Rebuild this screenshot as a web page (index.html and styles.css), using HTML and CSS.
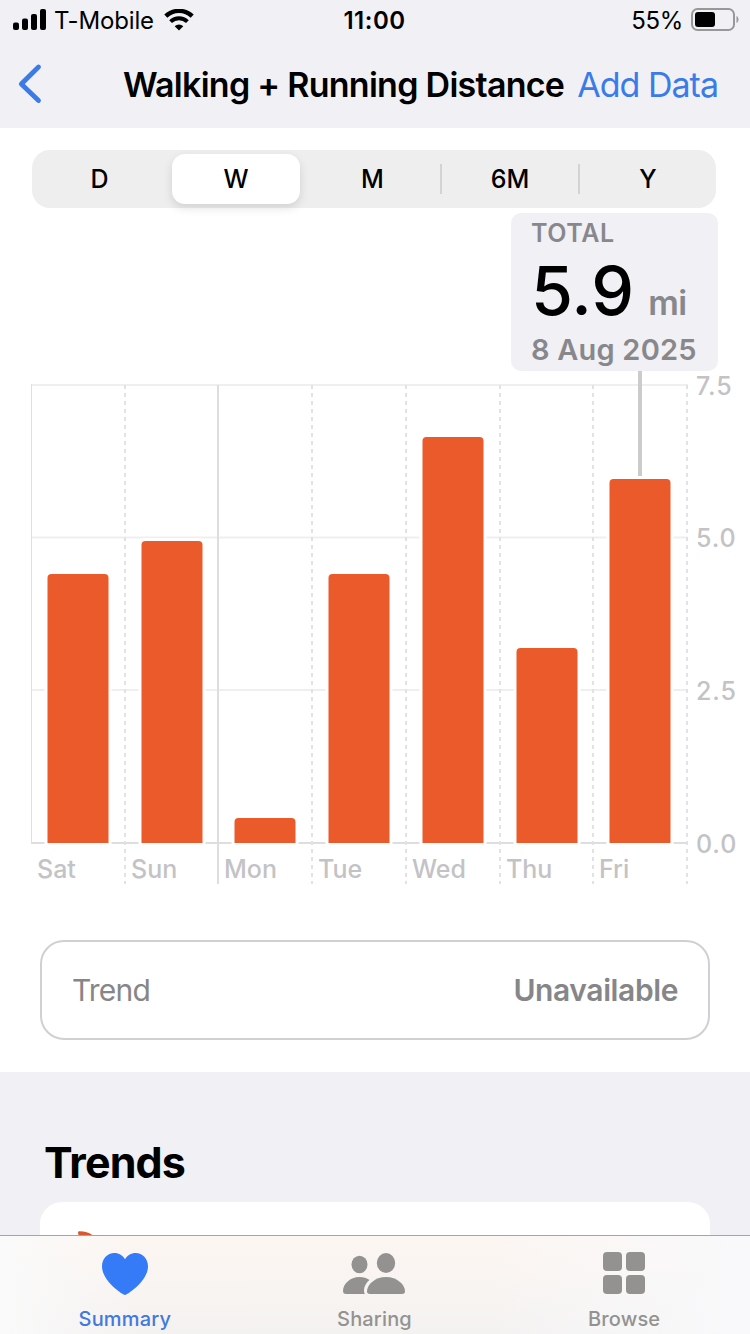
FILE: index.html
```html
<!DOCTYPE html>
<html lang="en">
<head>
  <meta charset="UTF-8">
  <meta name="viewport" content="width=device-width, initial-scale=1">
  <title>Walking + Running Distance</title>
  <link rel="stylesheet" href="styles.css">
</head>
<body>
  <!-- Status bar -->
  <div class="status-bar">
    <div class="status-left">
      <svg class="signal" width="34" height="22" viewBox="0 0 34 22">
        <rect x="0" y="13.5" width="6" height="7.5" rx="2"/>
        <rect x="9" y="9.5" width="6" height="11.5" rx="2"/>
        <rect x="18" y="5" width="6" height="16" rx="2"/>
        <rect x="27" y="0" width="6" height="21" rx="2"/>
      </svg>
      <span class="carrier">T-Mobile</span>
      <svg class="wifi" width="30" height="22" viewBox="0 0 30 22">
        <path d="M1.8 7.2a19 19 0 0 1 26.4 0" fill="none" stroke="#000" stroke-width="4.4"/>
        <path d="M6.6 12.6a12.2 12.2 0 0 1 16.8 0" fill="none" stroke="#000" stroke-width="4"/>
        <path d="M15 21.5l-4.3-4.3a6.1 6.1 0 0 1 8.6 0z"/>
      </svg>
    </div>
    <span class="clock">11:00</span>
    <div class="status-right">
      <span class="percent">55%</span>
      <svg class="battery" width="49" height="24" viewBox="0 0 49 24">
        <rect x="1" y="1" width="42" height="21" rx="5.5" fill="none" stroke="#98989b" stroke-width="2"/>
        <rect x="4" y="4" width="20" height="15" rx="3"/>
        <path d="M45.5 8v7c1.4-.6 2-2 2-3.5s-.6-2.9-2-3.5z" fill="#98989b"/>
      </svg>
    </div>
  </div>

  <!-- Navigation -->
  <header class="nav-bar">
    <svg class="back" width="26" height="42" viewBox="0 0 26 42">
      <path d="M21.5 4L4.3 21l17.200 16.500" fill="none" stroke="#3b7be8" stroke-width="4.8" stroke-linecap="round" stroke-linejoin="round"/>
    </svg>
    <h1>Walking + Running Distance</h1>
    <a class="add-data">Add Data</a>
  </header>

  <main>
    <section class="chart-section">
      <!-- Time range -->
      <div class="segments">
        <span class="segment">D</span>
        <span class="segment active">W</span>
        <span class="segment">M</span>
        <span class="segment divided">6M</span>
        <span class="segment divided">Y</span>
      </div>

      <div class="chart-wrap">
        <svg class="chart" width="750" height="520" viewBox="0 370 750 520">
          <!-- Grid -->
          <g class="grid-rows">
            <path d="M31 385H688M31 537.5H688M31 690H688"/>
            <path class="baseline" d="M31 843H688"/>
          </g>
          <path class="edge" d="M31.5 384V844"/>
          <path class="week-start" d="M218 385V884"/>
          <path class="grid-days" d="M125 385V884M312 385V884M406 385V884M500 385V884M593 385V884M687 385V884"/>

          <!-- Selected day marker -->
          <path class="marker" d="M640 370V476"/>

          <!-- Bars -->
          <g class="bars">
            <path d="M47.5 843V578q0-4 4-4h53q4 0 4 4V843z"/>
            <path d="M141.5 843V545q0-4 4-4h53q4 0 4 4V843z"/>
            <path d="M234.5 843V822q0-4 4-4h53q4 0 4 4V843z"/>
            <path d="M328.5 843V578q0-4 4-4h53q4 0 4 4V843z"/>
            <path d="M422.5 843V441q0-4 4-4h53q4 0 4 4V843z"/>
            <path d="M516.5 843V652q0-4 4-4h53q4 0 4 4V843z"/>
            <path d="M609.5 843V483q0-4 4-4h53q4 0 4 4V843z"/>
          </g>

          <!-- Axis labels -->
          <g class="axis">
            <text x="37" y="878">Sat</text>
            <text x="131" y="878">Sun</text>
            <text x="224" y="878">Mon</text>
            <text x="318" y="878">Tue</text>
            <text x="412" y="878">Wed</text>
            <text x="506" y="878">Thu</text>
            <text x="599" y="878">Fri</text>
          </g>
          <g class="axis values">
            <text x="696" y="395">7.5</text>
            <text x="696" y="547">5.0</text>
            <text x="696" y="700">2.5</text>
            <text x="696" y="853">0.0</text>
          </g>
        </svg>

        <div class="callout">
          <div class="callout-label">TOTAL</div>
          <div class="callout-value">5.9<span class="unit">mi</span></div>
          <div class="callout-date">8 Aug 2025</div>
        </div>
      </div>

      <div class="trend-row">
        <span>Trend</span>
        <strong>Unavailable</strong>
      </div>
    </section>

    <section class="trends">
      <h2>Trends</h2>
      <div class="card">
        <svg class="flame" width="24" height="24" viewBox="0 0 24 24">
          <path d="M2 .3C8 .2 12 1.500 16 4.500C20 8 22 14 22 24h-6C16 14 11 6 2 4.500Q0 1 2 .3z" fill="#d9572e"/>
        </svg>
      </div>
    </section>
  </main>

  <!-- Tabs -->
  <nav class="tab-bar">
    <a class="tab selected">
      <svg width="46" height="44" viewBox="0 0 46 44">
        <path d="M23 43C21 43 0 29 0 14.5C0 6.5 5.5 1 12.3 1C17 1 21 3.5 23 7.3C25 3.5 29 1 33.7 1C40.5 1 46 6.5 46 14.5C46 29 25 43 23 43z"/>
      </svg>
      <span>Summary</span>
    </a>
    <a class="tab">
      <svg width="62" height="44" viewBox="1 0 62 44">
        <ellipse cx="17.5" cy="12.5" rx="8" ry="8.8"/>
        <ellipse cx="44" cy="11" rx="9.2" ry="10"/>
        <path d="M4 42C2 42 1 41 1 39C1 32 8 25 17.5 25C21.5 25 24.8 26 27.5 28C24 31 22 34.5 22 38.5C22 40 22.2 41 23 42z"/>
        <path d="M28 42C26 42 25 41 25 39.5C25 32.5 33 25 44 25C55 25 63 32.5 63 39.5C63 41 62 42 60 42z"/>
      </svg>
      <span>Sharing</span>
    </a>
    <a class="tab">
      <svg width="42" height="44" viewBox="0 0 42 44">
        <rect x="0" y="0" width="19" height="19" rx="4"/>
        <rect x="23" y="0" width="19" height="19" rx="4"/>
        <rect x="0" y="23" width="19" height="19" rx="4"/>
        <rect x="23" y="23" width="19" height="19" rx="4"/>
      </svg>
      <span>Browse</span>
    </a>
  </nav>
</body>
</html>
```
FILE: styles.css
```css
* {
  box-sizing: border-box;
}
body {
  margin: 0;
  width: 750px;
  height: 1334px;
  display: flex;
  flex-direction: column;
  overflow: hidden;
  background: #f1f0f5;
  color: #000;
  font-family: Inter, "Liberation Sans", sans-serif;
}
svg {
  display: block;
  flex: none;
}
h1, h2 {
  margin: 0;
}

/* Status bar */
.status-bar {
  height: 40px;
  display: grid;
  grid-template-columns: 1fr auto 1fr;
  align-items: center;
  padding: 0 10px 0 13px;
  font-size: 24px;
  line-height: 38px;
}
.status-left, .status-right {
  display: flex;
  align-items: center;
}
.status-right {
  justify-content: flex-end;
}
.carrier {
  margin: 0 10px 0 7px;
  padding-top: 2px;
  letter-spacing: -0.15px;
}
.clock {
  margin-right: 4px;
  padding-top: 2px;
  font-weight: 600;
  letter-spacing: 0.5px;
}
.percent {
  margin-right: 8px;
  padding-top: 2px;
  letter-spacing: -0.3px;
}

/* Navigation */
.nav-bar {
  height: 88px;
  display: flex;
  align-items: center;
  padding: 0 32px 0 17px;
  white-space: nowrap;
}
.nav-bar h1 {
  margin-left: 80px;
  font-size: 34px;
  font-weight: 600;
  letter-spacing: -0.73px;
}
.add-data {
  margin-left: auto;
  font-size: 34px;
  color: #3b7be8;
  letter-spacing: -1px;
}

main {
  flex: 1;
  min-height: 0;
  overflow: hidden;
}
.chart-section {
  height: 944px;
  padding-top: 22px;
  background: #fff;
}

/* Time range */
.segments {
  width: 684px;
  height: 58px;
  margin-left: 32px;
  padding: 4px 0 4px;
  display: grid;
  grid-template-columns: 135px 138px 135px 138px 138px;
  align-items: center;
  background: #eeeeef;
  border-radius: 18px;
}
.segment {
  font-size: 25px;
  font-weight: 500;
  line-height: 50px;
  text-align: center;
}
.segment.active {
  margin: 0 5px;
  background: #fff;
  border-radius: 13px;
  box-shadow: 0 4px 10px rgba(0, 0, 0, 0.12);
}
.segment.divided {
  line-height: 30px;
  border-left: 2px solid #d3d3d5;
}

/* Chart */
.chart-wrap {
  position: relative;
  padding-top: 162px;
}
.chart path {
  fill: none;
  stroke-width: 2;
}
.grid-rows path {
  stroke: #efefef;
}
.chart .baseline {
  stroke: #dedede;
}
.chart .edge {
  stroke: #dfdfe0;
  stroke-width: 1;
}
.week-start {
  stroke: #dedee0;
}
.grid-days {
  stroke: #e2e2e4;
  stroke-dasharray: 4 4;
}
.chart .marker {
  stroke: #cbcbcb;
  stroke-width: 4;
}
.chart .bars path {
  fill: #eb5a2a;
  stroke: #fff;
  stroke-width: 6;
  paint-order: stroke;
}
.axis {
  fill: #c3c3c6;
  font-size: 25px;
  font-weight: 500;
}
.values {
  letter-spacing: 0.9px;
}
.callout {
  position: absolute;
  top: 5px;
  left: 511px;
  width: 207px;
  height: 158px;
  padding: 7px 0 0 20px;
  background: #f1f0f5;
  border-radius: 10px;
  color: #88888c;
  font-weight: 600;
  white-space: nowrap;
}
.callout-label {
  font-size: 25px;
  line-height: 27px;
  letter-spacing: 0.6px;
}
.callout-value {
  height: 84px;
  color: #000;
  font-size: 68px;
  font-weight: 500;
  line-height: 86px;
}
.unit {
  margin-left: 14px;
  color: #88888c;
  font-size: 34px;
  font-weight: 600;
  letter-spacing: -0.6px;
}
.callout-date {
  font-size: 29px;
  line-height: 38px;
  letter-spacing: 0.2px;
}

/* Trend row */
.trend-row {
  height: 100px;
  margin: 50px 40px 0;
  padding: 0 30px;
  display: flex;
  align-items: center;
  justify-content: space-between;
  border: 2px solid #d0d0d2;
  border-radius: 24px;
  color: #868688;
  font-size: 30px;
  letter-spacing: -0.8px;
}
.trend-row strong {
  font-weight: 600;
  letter-spacing: -0.4px;
}

/* Trends */
.trends {
  padding: 63px 40px 0;
}
.trends h2 {
  margin-left: 4px;
  font-size: 43px;
  line-height: 54px;
  font-weight: 700;
  letter-spacing: -0.9px;
}
.card {
  height: 200px;
  margin-top: 13px;
  padding: 29px 0 0 37px;
  background: #fff;
  border-radius: 22px;
}

/* Tabs */
.tab-bar {
  height: 99px;
  flex: none;
  display: grid;
  grid-template-columns: repeat(3, 1fr);
  padding-right: 1px;
  border-top: 1px solid #a5a5a8;
  background: linear-gradient(90deg, #fafafa 0%, rgba(250, 250, 250, 0) 18%, rgba(250, 250, 250, 0) 65%, #f9f9fb 100%), linear-gradient(#fcf6f2, #f4f2f1);
}
.tab {
  display: flex;
  flex-direction: column;
  align-items: center;
  padding-top: 16px;
  color: #949290;
  fill: #949290;
  font-size: 20px;
  font-weight: 500;
  line-height: 24px;
}
.tab span {
  margin-top: 11px;
  letter-spacing: 0.15px;
}
.tab.selected {
  color: #4378dd;
  fill: #357bf7;
}
```
